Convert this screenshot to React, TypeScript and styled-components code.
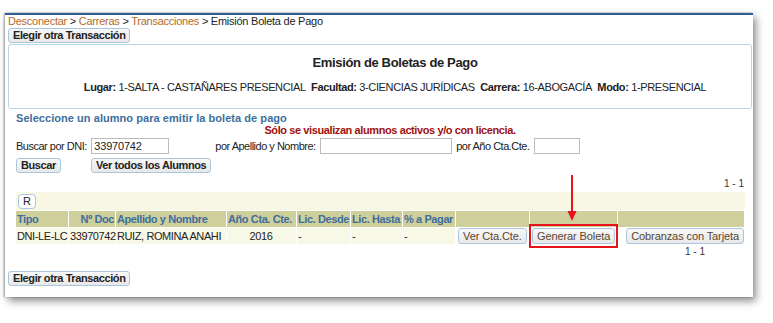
import React from 'react';
import styled, { createGlobalStyle } from 'styled-components';

const GlobalStyle = createGlobalStyle`
  body {
    margin: 0;
    background: #ffffff;
    font-family: "Liberation Sans", Arial, sans-serif;
  }
`;

const Page = styled.div`
  width: 773px;
  height: 323px;
  padding: 13px 0 0 5px;
  box-sizing: border-box;
  overflow: hidden;
`;

const Window = styled.div`
  width: 748px;
  height: 284px;
  box-sizing: border-box;
  border-top: 2px solid #2d5f97;
  background: #fff;
  box-shadow: 3px 4px 8px rgba(0, 0, 0, 0.45), -1px 0 2px rgba(0, 0, 0, 0.35);
  padding: 0 1px 0 3px;
`;

const Crumbs = styled.div`
  font-size: 11px;
  letter-spacing: -0.25px;
  color: #222;
  line-height: 12px;
`;

const CrumbLink = styled.a`
  color: #b26a2e;
  text-decoration: none;
`;

const Toolbar = styled.div<{ $top: number }>`
  display: flex;
  margin-top: ${p => p.$top}px;
`;

const Btn = styled.button`
  font-family: "Liberation Sans", Arial, sans-serif;
  font-size: 11px;
  font-weight: 700;
  letter-spacing: -0.4px;
  color: #222;
  background: linear-gradient(#f8f8f8, #e8e8e8);
  border: 1px solid #a9c6de;
  border-radius: 3px;
  padding: 0 4px;
  height: 15px;
  line-height: 13px;
  white-space: nowrap;
`;

const RowBtn = styled.button`
  font-family: "Liberation Sans", Arial, sans-serif;
  font-size: 11px;
  letter-spacing: -0.1px;
  color: #5a4630;
  background: linear-gradient(#f8f8f8, #e8e8e8);
  border: 1px solid #a9c6de;
  border-radius: 3px;
  padding: 0 4px;
  height: 16px;
  line-height: 14px;
  white-space: nowrap;
`;

const HeaderBox = styled.div`
  margin-top: 1px;
  border: 1px solid #b3d6ea;
  border-radius: 3px;
  height: 65px;
  box-sizing: border-box;
  padding-left: 30px;
  display: flex;
  flex-direction: column;
  align-items: center;
`;

const Title = styled.div`
  font-size: 13px;
  font-weight: 700;
  letter-spacing: -0.35px;
  color: #222;
  line-height: 15px;
  margin-top: 10px;
`;

const Info = styled.div`
  font-size: 11px;
  letter-spacing: -0.37px;
  color: #222;
  line-height: 13px;
  margin-top: 11px;
  b { font-weight: 700; }
`;

const Body = styled.div`
  padding: 0 7px 0 8px;
`;

const Select = styled.div`
  font-size: 11px;
  font-weight: 700;
  letter-spacing: 0.05px;
  color: #3d6e9c;
  margin-top: 3px;
  line-height: 12px;
`;

const Notice = styled.div`
  font-size: 11px;
  font-weight: 700;
  letter-spacing: -0.4px;
  color: #a01010;
  text-align: center;
  line-height: 12px;
  margin-left: 19px;
`;

const SearchRow = styled.div`
  display: flex;
  align-items: center;
  font-size: 11px;
  letter-spacing: -0.5px;
  color: #222;
  margin-top: 2px;
  height: 16px;
  white-space: pre;
`;

const Field = styled.input<{ $w: number; $gap?: number }>`
  width: ${p => p.$w}px;
  height: 16px;
  box-sizing: border-box;
  border: 1px solid #bbb;
  padding: 0 2px;
  font-family: "Liberation Sans", Arial, sans-serif;
  font-size: 11px;
  letter-spacing: -0.2px;
  color: #222;
  margin: 0 ${p => p.$gap || 0}px 0 2px;
`;

const ButtonRow = styled.div`
  display: flex;
  gap: 30px;
  margin-top: 4px;
`;

const Counter = styled.div<{ $top: number; $right: number }>`
  font-size: 10px;
  color: #333;
  text-align: right;
  line-height: 12px;
  margin-top: ${p => p.$top}px;
  padding-right: ${p => p.$right}px;
`;

const Band = styled.div`
  background: #f7f7e4;
  height: 18px;
  display: flex;
  align-items: center;
  padding-left: 2px;
  margin-top: 2px;
`;

const RBtn = styled.button`
  font-family: "Liberation Sans", Arial, sans-serif;
  font-size: 11px;
  height: 15px;
  padding: 0 4px;
  background: #fff;
  border: 1px solid #a9c6de;
  border-radius: 4px;
  color: #222;
  line-height: 13px;
`;

const TableWrap = styled.div`
  position: relative;
`;

const Table = styled.table`
  border-collapse: separate;
  border-spacing: 1px;
  table-layout: fixed;
  width: 730px;
  margin-left: -1px;
  font-size: 11px;
  letter-spacing: -0.4px;
`;

const Th = styled.th<{ $align?: string }>`
  background: #cfcf9c;
  color: #3d6e9c;
  font-weight: 700;
  text-align: ${p => p.$align || 'left'};
  height: 16px;
  padding: 0 1px;
  white-space: nowrap;
  overflow: hidden;
`;

const Td = styled.td<{ $align?: string }>`
  background: #f8f8e6;
  color: #222;
  text-align: ${p => p.$align || 'left'};
  height: 16px;
  padding: 0 2px 0 1px;
  white-space: nowrap;
`;

const BtnCell = styled.td<{ $align?: string }>`
  text-align: ${p => p.$align || 'center'};
  padding: 0 0 0 2px;
  white-space: nowrap;
  letter-spacing: 0;
`;

const Highlight = styled.span`
  position: relative;
  display: inline-block;
  &::after {
    content: '';
    position: absolute;
    left: -3px;
    right: -3px;
    top: -4px;
    bottom: -4px;
    border: 2px solid #e8121b;
  }
`;

const Arrow = styled.svg`
  position: absolute;
  left: 550px;
  top: -35px;
`;

export default function App() {
  return (
    <>
      <GlobalStyle />
      <Page>
        <Window>
          <Crumbs>
            <CrumbLink>Desconectar</CrumbLink> &gt; <CrumbLink>Carreras</CrumbLink> &gt;{' '}
            <CrumbLink>Transacciones</CrumbLink> &gt; Emisión Boleta de Pago
          </Crumbs>
          <Toolbar $top={1}>
            <Btn>Elegir otra Transacción</Btn>
          </Toolbar>
          <HeaderBox>
            <Title>Emisión de Boletas de Pago</Title>
            <Info>
              <b>Lugar:</b> 1-SALTA - CASTAÑARES PRESENCIAL&nbsp;&nbsp;<b>Facultad:</b> 3-CIENCIAS JURÍDICAS&nbsp;&nbsp;
              <b>Carrera:</b> 16-ABOGACÍA&nbsp;&nbsp;<b>Modo:</b> 1-PRESENCIAL
            </Info>
          </HeaderBox>
          <Body>
            <Select>Seleccione un alumno para emitir la boleta de pago</Select>
            <Notice>Sólo se visualizan alumnos activos y/o con licencia.</Notice>
            <SearchRow>
              Buscar por DNI: <Field $w={78} $gap={46} defaultValue="33970742" />
              por Apellido y Nombre: <Field $w={132} $gap={4} />
              por Año Cta.Cte. <Field $w={46} />
            </SearchRow>
            <ButtonRow>
              <Btn>Buscar</Btn>
              <Btn>Ver todos los Alumnos</Btn>
            </ButtonRow>
            <Counter $top={5} $right={1}>1 - 1</Counter>
            <Band>
              <RBtn>R</RBtn>
            </Band>
            <TableWrap>
              <Table>
                <colgroup>
                  <col style={{ width: 52 }} />
                  <col style={{ width: 46 }} />
                  <col style={{ width: 110 }} />
                  <col style={{ width: 69 }} />
                  <col style={{ width: 53 }} />
                  <col style={{ width: 51 }} />
                  <col style={{ width: 52 }} />
                  <col style={{ width: 73 }} />
                  <col style={{ width: 87 }} />
                  <col />
                </colgroup>
                <thead>
                  <tr>
                    <Th>Tipo</Th>
                    <Th $align="right">Nº Doc</Th>
                    <Th>Apellido y Nombre</Th>
                    <Th>Año Cta. Cte.</Th>
                    <Th>Lic. Desde</Th>
                    <Th>Lic. Hasta</Th>
                    <Th>% a Pagar</Th>
                    <Th></Th>
                    <Th></Th>
                    <Th></Th>
                  </tr>
                </thead>
                <tbody>
                  <tr>
                    <Td>DNI-LE-LC</Td>
                    <Td $align="right">33970742</Td>
                    <Td>RUIZ, ROMINA ANAHI</Td>
                    <Td $align="center">2016</Td>
                    <Td>-</Td>
                    <Td>-</Td>
                    <Td>-</Td>
                    <BtnCell $align="left"><RowBtn>Ver Cta.Cte.</RowBtn></BtnCell>
                    <BtnCell $align="left">
                      <Highlight><RowBtn>Generar Boleta</RowBtn></Highlight>
                    </BtnCell>
                    <BtnCell $align="right"><RowBtn>Cobranzas con Tarjeta</RowBtn></BtnCell>
                  </tr>
                </tbody>
              </Table>
              <Arrow width="12" height="47" viewBox="0 0 12 47">
                <line x1="6" y1="0" x2="6" y2="38" stroke="#e8121b" strokeWidth="2" />
                <polygon points="1.5,36 10.5,36 6,46" fill="#e8121b" />
              </Arrow>
            </TableWrap>
            <Counter $top={1} $right={40}>1 - 1</Counter>
          </Body>
          <Toolbar $top={13}>
            <Btn>Elegir otra Transacción</Btn>
          </Toolbar>
        </Window>
      </Page>
    </>
  );
}
